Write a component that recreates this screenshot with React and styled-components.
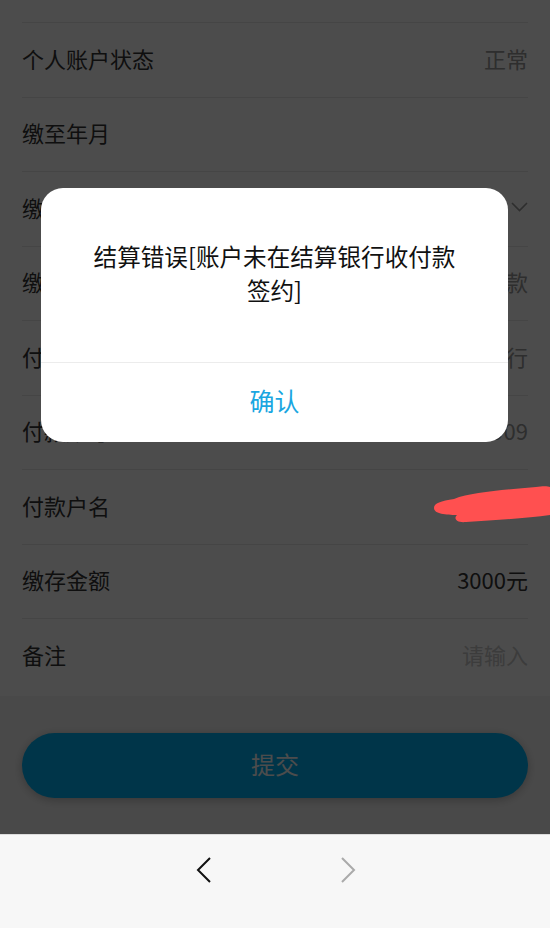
import styled, { createGlobalStyle } from "styled-components";

const GlobalStyle = createGlobalStyle`
  html, body {
    margin: 0;
    padding: 0;
  }
  body {
    font-family: "Noto Sans CJK SC", "Noto Sans", sans-serif;
    background: #f7f7f7;
  }
`;

const Screen = styled.div`
  position: relative;
  width: 550px;
  height: 928px;
  display: flex;
  flex-direction: column;
  overflow: hidden;
`;

const Page = styled.div`
  position: relative;
  flex: 1;
  display: flex;
  flex-direction: column;
  background: #f5f5f5;
`;

const FormList = styled.div`
  background: #fff;
  padding: 22px 0 3px;
`;

const Row = styled.div`
  height: 73.5px;
  box-sizing: content-box;
  margin: 0 22px;
  border-top: 1px solid #e6e6e6;
  display: flex;
  align-items: center;
  justify-content: space-between;
  font-size: 22px;
  line-height: 1;
  & > * {
    margin-top: -4px;
  }
`;

const Label = styled.span`
  color: #333;
`;

const Value = styled.span`
  color: ${(p) => (p.$tone === "strong" ? "#333" : p.$tone === "hint" ? "#c8c8c8" : "#999")};
  display: flex;
  align-items: center;
  gap: 8px;
`;

const ButtonArea = styled.div`
  padding: 37px 22px 0;
`;

const SubmitButton = styled.button`
  width: 100%;
  height: 65px;
  padding: 0 0 4px;
  border: none;
  border-radius: 33px;
  background: #00b2f4;
  color: #fff;
  font-family: inherit;
  font-size: 24px;
  box-shadow: 0 2px 10px rgba(0, 0, 0, 0.25);
`;

const Overlay = styled.div`
  position: absolute;
  inset: 0;
  background: rgba(0, 0, 0, 0.7);
  display: flex;
  justify-content: flex-start;
  align-items: flex-start;
  padding: 188px 0 0 41px;
`;

const Dialog = styled.div`
  width: 467px;
  background: #fff;
  border-radius: 22px;
  overflow: hidden;
  display: flex;
  flex-direction: column;
`;

const Message = styled.div`
  padding: 51px 48px 55px;
  font-size: 23.6px;
  line-height: 34px;
  color: #111;
  text-align: center;
`;

const ConfirmButton = styled.div`
  height: 73px;
  padding-bottom: 6px;
  border-top: 1px solid #ececec;
  display: flex;
  align-items: center;
  justify-content: center;
  font-size: 25px;
  color: #1aa6e1;
`;

const NavBar = styled.div`
  height: 94px;
  background: #f7f7f7;
  border-top: 1px solid #dcdcdc;
  box-sizing: border-box;
  display: flex;
  justify-content: center;
  align-items: flex-start;
  padding: 22px 0 0 2px;
  gap: 128px;
`;

const Scribble = styled.svg`
  position: absolute;
  left: 432px;
  top: 484px;
`;

const Chevron = ({ dir, color }) => (
  <svg width="16" height="26" viewBox="0 0 16 26">
    <polyline
      points={dir === "left" ? "14,1 2,13 14,25" : "2,1 14,13 2,25"}
      fill="none"
      stroke={color}
      strokeWidth="2"
    />
  </svg>
);

const DownArrow = () => (
  <svg width="17" height="10" viewBox="0 0 17 10">
    <polyline points="1,1 8.5,8.5 16,1" fill="none" stroke="#999" strokeWidth="1.6" />
  </svg>
);

const rows = [
  { label: "个人账户状态", value: "正常" },
  { label: "缴至年月", value: "" },
  { label: "缴存类型", value: "", arrow: true },
  { label: "缴存方式", value: "转账缴款" },
  { label: "付款银行", value: "中国建设银行" },
  { label: "付款账号", value: "6217****0909" },
  { label: "付款户名", value: "" },
  { label: "缴存金额", value: "3000元", tone: "strong" },
  { label: "备注", value: "请输入", tone: "hint" },
];

export default function App() {
  return (
    <>
      <GlobalStyle />
      <Screen>
        <Page>
          <FormList>
            {rows.map((r) => (
              <Row key={r.label}>
                <Label>{r.label}</Label>
                <Value $tone={r.tone}>
                  {r.value}
                  {r.arrow && <DownArrow />}
                </Value>
              </Row>
            ))}
          </FormList>
          <ButtonArea>
            <SubmitButton>提交</SubmitButton>
          </ButtonArea>
          <Overlay>
            <Dialog>
              <Message>结算错误[账户未在结算银行收付款签约]</Message>
              <ConfirmButton>确认</ConfirmButton>
            </Dialog>
          </Overlay>
        </Page>
        <NavBar>
          <Chevron dir="left" color="#111" />
          <Chevron dir="right" color="#aaa" />
        </NavBar>
        <Scribble width="118" height="40" viewBox="0 0 118 40">
          <path
            d="M2,24 C2,19 9,17 22,15 C40,8 72,6 104,3 C110,2 116,2 118,3 L118,31 C96,34 66,36 34,38 C25,39 21,35 25,31 C14,31 2,30 2,24 Z"
            fill="#ff5050"
          />
        </Scribble>
      </Screen>
    </>
  );
}
